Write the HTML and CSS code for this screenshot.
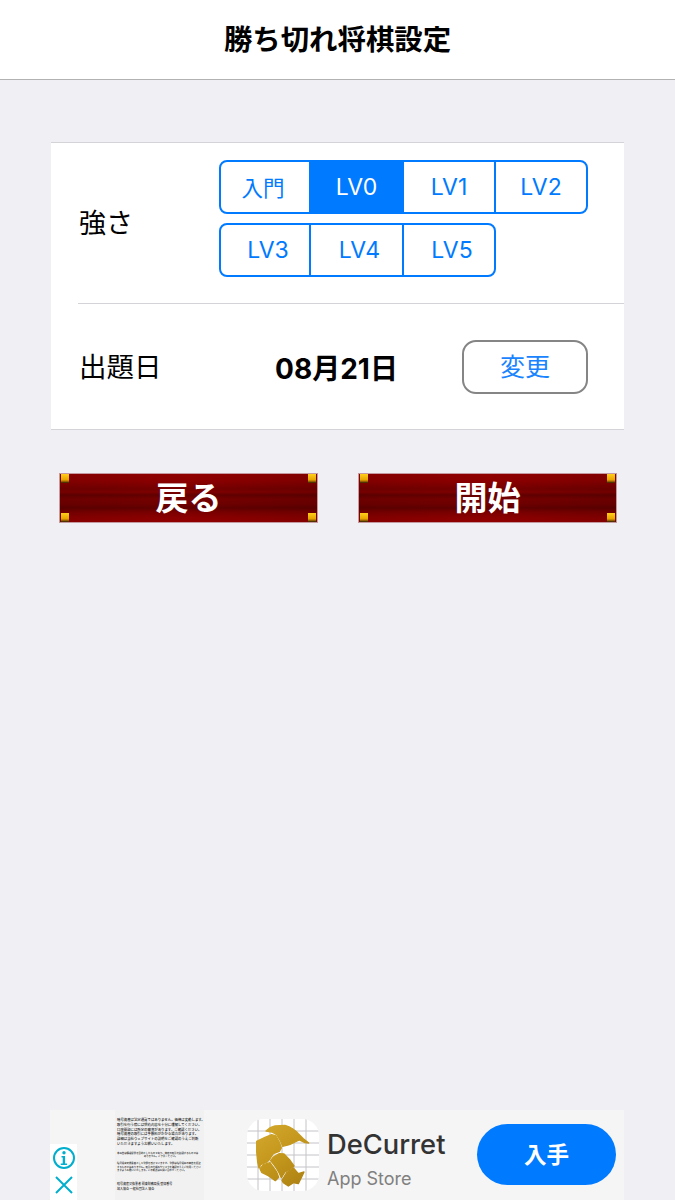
FILE: index.html
```html
<!DOCTYPE html>
<html lang="ja">
<head>
    <meta charset="UTF-8">
    <meta name="viewport" content="width=device-width, initial-scale=1.0">
    <title>勝ち切れ将棋設定</title>
    <link rel="stylesheet" href="styles.css">
</head>
<body>
    <header class="title-bar">勝ち切れ将棋設定</header>

    <main class="content">
        <section class="card">
            <div class="row row-level">
                <div class="row-label">強さ</div>
                <div class="levels">
                    <div class="segments">
                        <div class="seg seg-first seg-kanji">入門</div>
                        <div class="seg seg-wide active">LV0</div>
                        <div class="seg seg-mid">LV1</div>
                        <div class="seg seg-mid">LV2</div>
                    </div>
                    <div class="segments segments-low">
                        <div class="seg seg-first">LV3</div>
                        <div class="seg seg-wide">LV4</div>
                        <div class="seg seg-mid">LV5</div>
                    </div>
                </div>
            </div>
            <div class="row row-date">
                <div class="row-label">出題日</div>
                <div class="date">08月21日</div>
                <div class="change">変更</div>
            </div>
        </section>

        <div class="actions">
            <div class="red-btn"><i class="tl"></i><i class="tr"></i><i class="bl"></i><i class="br"></i>戻る</div>
            <div class="red-btn"><i class="tl"></i><i class="tr"></i><i class="bl"></i><i class="br"></i>開始</div>
        </div>
    </main>

    <aside class="ad">
        <div class="ad-marks">
            <svg width="27" height="56" viewBox="0 0 27 56">
                <circle cx="14" cy="14" r="10" fill="none" stroke="#00aecd" stroke-width="2"/>
                <circle cx="14" cy="8.8" r="1.7" fill="#00aecd"/>
                <path d="M11.5 12h3.6v7.5h2v1.6h-6.4v-1.6h2v-6h-1.2z" fill="#00aecd"/>
                <path d="M6 33l16 16M22 33L6 49" fill="none" stroke="#00aecd" stroke-width="2"/>
            </svg>
        </div>
        <div class="ad-notice">
            <div class="block">
                <p>暗号資産は法定通貨ではありません。価格は変動します。</p>
                <p>取引を行う際には契約内容を十分に理解してください。</p>
                <p>口座開設には所定の審査があります。ご確認ください。</p>
                <p>暗号資産の取引には手数料がかかる場合があります。</p>
                <p>詳細は当社ウェブサイトの説明をご確認のうえご判断</p>
                <p>いただきますようお願いいたします。</p>
            </div>
            <div class="block block-small">
                <p>本広告は情報提供を目的としたものであり、特定の取引を勧誘するものでは</p>
                <p class="center">ありません。ご了承ください。</p>
            </div>
            <div class="block block-small block-third">
                <p>暗号資産交換業者として登録を受けていますが、登録は暗号資産の価値を保証</p>
                <p>するものではありません。取引の仕組みやリスクを確認のうえご利用ください</p>
                <p>ますようお願いいたします。ご不明点はお問い合わせください。</p>
            </div>
            <div class="block block-last">
                <p>暗号資産交換業者 関東財務局長 登録番号</p>
                <p>加入協会 一般社団法人 協会</p>
            </div>
        </div>
        <svg class="ad-icon" width="72" height="72" viewBox="21 21 216 216">
            <defs>
                <clipPath id="icon-clip"><rect x="21" y="21" width="216" height="216" rx="50"/></clipPath>
                <linearGradient id="gold" gradientUnits="userSpaceOnUse" x1="50" y1="40" x2="190" y2="220">
                    <stop offset="0" stop-color="#d4a92c"/>
                    <stop offset="0.5" stop-color="#c4971c"/>
                    <stop offset="1" stop-color="#ad8112"/>
                </linearGradient>
            </defs>
            <g clip-path="url(#icon-clip)">
                <rect x="21" y="21" width="216" height="216" fill="#fff"/>
                <path d="M54 21v216M90 21v216M126 21v216M162 21v216M198 21v216M21 57h216M21 93h216M21 129h216M21 165h216M21 201h216" stroke="#c4c4c8" stroke-width="3"/>
                <g fill="url(#gold)" stroke="url(#gold)" stroke-width="4" stroke-linejoin="round">
                    <path d="M78 57Q90 45 105 42L135 40Q160 48 175 65L190 80L206 93L195 92L178 84L165 90Q150 100 128 103L122 88L110 68L96 60Z"/>
                    <path d="M50 88L75 76L95 68L108 72L118 90L124 108L118 118L100 125L90 140L82 150L62 158L57 168L53 150L50 120Z"/>
                    <path d="M60 170L70 158L90 152L100 166L110 180L116 196L106 206L85 191L65 181Z"/>
                    <path d="M92 146L100 135L118 125L132 126L150 145L162 162L150 172L135 180L124 197L115 178L105 162Z"/>
                    <path d="M126 205L140 182L160 168L175 185L192 180L185 195L175 215L160 212L145 222L130 212Z"/>
                </g>
            </g>
        </svg>
        <div class="ad-app">
            <div class="ad-name">DeCurret</div>
            <div class="ad-store">App Store</div>
        </div>
        <div class="ad-get">入手</div>
    </aside>
</body>
</html>
```

FILE: styles.css
```css
html, body {
    height: 100%;
}
body {
    margin: 0;
    display: flex;
    flex-direction: column;
    min-height: 1200px;
    background-color: #efeff4;
    color: #000;
    font-family: Inter, "Noto Sans CJK JP", sans-serif;
}
.title-bar {
    height: 79px;
    line-height: 79px;
    text-align: center;
    font-size: 28.4px;
    font-weight: bold;
    background-color: #fff;
    border-bottom: 1px solid #b2b2b2;
}
.content {
    flex: 1;
    padding: 62px 51px 0;
}
.card {
    background-color: #fff;
    border-top: 1px solid #d4d4d8;
    border-bottom: 1px solid #d4d4d8;
}
.row {
    display: flex;
    align-items: center;
    margin-left: 27px;
    padding-right: 36px;
}
.row-level {
    height: 160px;
    border-bottom: 1px solid #d4d4d8;
}
.row-date {
    height: 125px;
}
.row-label {
    width: 140px;
    padding-left: 1px;
    font-size: 27px;
    flex-shrink: 0;
    margin-bottom: 3px;
}
.row-date .row-label {
    font-size: 27.5px;
}
.levels {
    display: flex;
    flex-direction: column;
    gap: 9px;
    margin-bottom: 9px;
}
.segments {
    display: flex;
    align-self: flex-start;
    height: 54px;
    box-sizing: border-box;
    border: 2px solid #007aff;
    border-radius: 8px;
    overflow: hidden;
}
.seg {
    display: flex;
    align-items: center;
    justify-content: center;
    box-sizing: border-box;
    font-size: 23px;
    color: #007aff;
    border-left: 2px solid #007aff;
}
.seg-kanji {
    font-size: 21.5px;
    padding: 0 4px 2px 0;
}
.seg-first {
    width: 88px;
    border-left: 0;
}
.seg-wide {
    width: 93px;
}
.seg-mid {
    width: 92px;
}
.segments-low .seg {
    padding-left: 6px;
}
.seg.active {
    background-color: #007aff;
    color: #fff;
}
.date {
    flex: 1;
    text-align: center;
    font-size: 28px;
    font-weight: bold;
    padding-right: 8px;
}
.change {
    width: 126px;
    height: 54px;
    line-height: 50px;
    box-sizing: border-box;
    text-align: center;
    font-size: 25px;
    color: #1a84ff;
    border: 2px solid #858585;
    border-radius: 14px;
}
.actions {
    display: flex;
    justify-content: space-between;
    margin: 43px 7px 0 8px;
}
.red-btn {
    position: relative;
    width: 259px;
    height: 50px;
    line-height: 48px;
    box-sizing: border-box;
    text-align: center;
    color: #fff;
    font-size: 33px;
    font-weight: bold;
    border: 1px solid #c49aa0;
    background-color: #800000;
    background-image:
        linear-gradient(90deg, rgba(0, 0, 0, 0.08), rgba(0, 0, 0, 0) 50%, rgba(0, 0, 0, 0.1)),
        linear-gradient(180deg, #900000 0, #8c0000 7px, #800000 11px, #740000 15px, #800000 18px, #620000 21px, #760000 25px, #700000 30px, #600000 34px, #7a0000 38px, #8a0000 43px, #920000 48px);
}
.red-btn i {
    position: absolute;
    width: 8px;
    height: 9px;
    background: linear-gradient(180deg, #ffcf1a 0, #e8a400 65%, #8a5a00 85%, #2d1c00 100%);
}
.red-btn .tl { left: 1px; top: 0; }
.red-btn .tr { right: 1px; top: 0; }
.red-btn .bl { left: 1px; bottom: 0; }
.red-btn .br { right: 1px; bottom: 0; }
.ad {
    position: relative;
    display: flex;
    align-items: center;
    height: 90px;
    margin: 0 51px 0 50px;
    background-color: #f5f5f5;
}
.ad-marks {
    position: absolute;
    left: 0;
    bottom: 0;
    height: 56px;
    background-color: #fff;
    line-height: 0;
}
.ad-notice {
    align-self: stretch;
    width: 89px;
    margin-left: 65px;
    padding: 8px 0 0 2px;
    box-sizing: border-box;
    overflow: hidden;
    background-color: #f1f1f1;
    font-family: "Noto Sans CJK JP", sans-serif;
    font-size: 3.4px;
    line-height: 4.8px;
    font-weight: 500;
    color: #222;
}
.ad-notice p {
    margin: 0;
    white-space: nowrap;
}
.block-small {
    margin-top: 5px;
    font-size: 2.4px;
    line-height: 3.6px;
}
.block-third {
    margin-top: 3px;
}
.block-last {
    margin-top: 9px;
    font-size: 3px;
}
.ad-notice .center {
    text-align: center;
}
.ad-icon {
    margin-left: 43px;
    flex-shrink: 0;
}
.ad-app {
    margin-left: 8px;
    margin-top: 14px;
}
.ad-name {
    font-size: 27.3px;
    font-weight: 500;
    line-height: 34px;
    color: #333;
}
.ad-store {
    font-size: 18px;
    line-height: 34px;
    color: #808080;
}
.ad-get {
    position: absolute;
    left: 427px;
    top: 14px;
    width: 139px;
    height: 61px;
    line-height: 61px;
    text-align: center;
    font-size: 22.5px;
    font-weight: bold;
    color: #fff;
    background-color: #007aff;
    border-radius: 31px;
}
```
